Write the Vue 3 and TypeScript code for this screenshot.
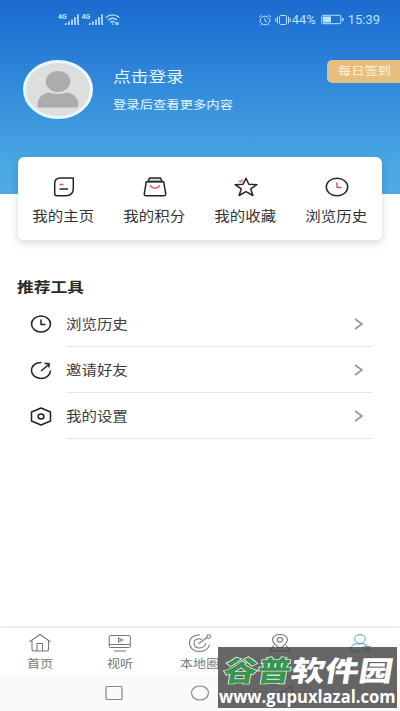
<script setup lang="ts">
interface Item { id: string; label: string }

const shortcuts: Item[] = [
  { id: 'home', label: '我的主页' },
  { id: 'points', label: '我的积分' },
  { id: 'star', label: '我的收藏' },
  { id: 'history', label: '浏览历史' },
]
const tools: Item[] = [
  { id: 'history', label: '浏览历史' },
  { id: 'invite', label: '邀请好友' },
  { id: 'settings', label: '我的设置' },
]
const tabs: Item[] = [
  { id: 'home', label: '首页' },
  { id: 'video', label: '视听' },
  { id: 'local', label: '本地圈' },
  { id: 'place', label: '' },
  { id: 'me', label: '' },
]
</script>

<template>
  <div class="screen">
    <header class="hero">
      <div class="status">
        <div class="signals">
          <template v-for="n in 2" :key="n">
            <span class="net">4G</span>
            <svg class="bars" width="14" height="11" viewBox="0 0 14 11"><path d="M1 11V9M4 11V7.5M7 11V5.5M10 11V3M13 11V.5" /></svg>
          </template>
          <svg class="wifi" width="15" height="11" viewBox="0 0 15 11"><path d="M.7 3.5q6.8-5.2 13.6 0M3 6q4.500-3.500 9 0M5.400 8.300q2.100-1.500 4.200 0M7 10h1M11 8v3M13 8v3" /></svg>
        </div>
        <div class="power">
          <svg width="14" height="12" viewBox="0 0 14 12"><ellipse cx="7" cy="6.500" rx="4.900" ry="4.300" /><path d="M7 4v3l2 1M1 3l2.500-2M13 3l-2.500-2M3 10.500 2 11.500M11 10.500l1 1" /></svg>
          <svg class="vib" width="16" height="12" viewBox="0 0 16 12"><rect x="4.500" y="1.500" width="7" height="9" rx="1" /><path d="M2.500 2.500v7M13.500 2.500v7M.8 4v4M15.200 4v4" /></svg>
          <span class="pct">44%</span>
          <svg class="battery" width="23" height="11" viewBox="0 0 23 11"><rect x=".8" y="1.300" width="19" height="8.400" rx="1" /><path class="fill" d="M2 2.500h8v6H2zM21 4h1.500v3H21z" /></svg>
          <span class="time">15:39</span>
        </div>
      </div>
      <div class="profile">
        <svg class="avatar" width="70" height="60" viewBox="0 0 70 60">
          <ellipse class="ring" cx="35" cy="29.500" rx="33.500" ry="28" />
          <ellipse class="person" cx="35" cy="21.500" rx="12.200" ry="10.500" />
          <path class="person" d="M14.700 48v-3.500c0-6 5.500-11.500 12-11.500q8.300 3 16.600 0c6.500 0 12 5.500 12 11.500V46q0 2-2.500 2z" transform="translate(0 -.5)" />
        </svg>
        <div class="login">
          <div class="name stretch">点击登录</div>
          <div class="hint stretch">登录后查看更多内容</div>
        </div>
        <div class="sign"><span class="stretch">每日签到</span></div>
      </div>
    </header>

    <section class="card">
      <div v-for="s in shortcuts" :key="s.id" class="shortcut">
        <svg width="24" height="20" viewBox="0 0 24 20">
          <template v-if="s.id === 'home'">
            <path d="M8.500 1H21.300V11.500Q21.300 18.700 14 18.700H5Q2.700 18.700 2.700 16.500V6.500Q2.700 1 8.500 1Z" /><path d="M7.500 12h8.500" /><path class="red" d="M7.500 7.500h4" />
          </template>
          <template v-else-if="s.id === 'points'">
            <path class="lid" d="M5 4.500 6.500 1h11L19 4.500z" /><path d="M3.300 4.700h17.400l2 12q.2 2-2 2H3.300q-2.200 0-2-2z" /><path class="red" d="M7 8.500q5 5.500 10 0" />
          </template>
          <template v-else-if="s.id === 'star'">
            <path d="m12 1.200 2.800 6.100 8.100.4-6.200 4.100 2.200 6.700-6.900-3.800-6.900 3.800 2.200-6.700-6.200-4.100 8.100-.4z" /><path class="red thin" d="m4.500 4 2 .8 2-2.500M8.500 6l1.400-2" />
          </template>
          <template v-else>
            <ellipse cx="12" cy="10" rx="10.700" ry="8.800" /><path class="red" d="M12 5.500v5h4.500" />
          </template>
        </svg>
        <span class="stretch">{{ s.label }}</span>
      </div>
    </section>

    <main class="tools">
      <h2 class="stretch">推荐工具</h2>
      <div v-for="t in tools" :key="t.id" class="row">
        <svg class="lead" width="22" height="19" viewBox="0 0 22 19">
          <template v-if="t.id === 'history'"><ellipse cx="11" cy="9" rx="9.500" ry="8" /><path d="M11 4.500v5h4.500" /></template>
          <template v-else-if="t.id === 'invite'"><path d="M11.500 1.500C5.800 1.200 1.500 5 1.500 9.500s4.300 8 9.500 8 9.500-3.700 9.500-8M11 10l8-6.800M14.500 2.500H19v4" /></template>
          <template v-else><path d="m11 1 9.500 4v9L11 18l-9.500-4V5z" /><ellipse cx="11" cy="9.500" rx="2.900" ry="2.500" /></template>
        </svg>
        <div class="line">
          <span class="stretch">{{ t.label }}</span>
          <svg class="arrow" width="10" height="12" viewBox="0 0 10 12"><path d="m1 1 7 5-7 5" /></svg>
        </div>
      </div>
    </main>

    <nav class="tabs">
      <div v-for="t in tabs" :key="t.id" class="tab" :class="{ active: t.id === 'me' }">
        <svg width="24" height="20" viewBox="0 0 24 20">
          <path v-if="t.id === 'home'" d="M1.500 8.700 12 1.500l10.500 7.200M4 7.500V16q0 2 2 2h12.500q2 0 2-2V7.500M9 18v-7.500h5.500V18" />
          <path v-else-if="t.id === 'video'" d="M3 2.500h17.500q1.800 0 1.800 1.500v9q0 1.500-1.800 1.500H3q-1.800 0-1.800-1.500V4Q1.200 2.500 3 2.500M1.500 11.500h20.500M6 18h12M10.500 5v4l4-2z" />
          <path v-else-if="t.id === 'local'" d="M12 2C6 1.500 1.500 5 1.500 10s4 8.500 10 8.500 9.500-3.500 10-7M14 6.500c-4-2-8 0-8 3.500s2.700 5 5.700 5 6-2 6-5M11 10.500l8-6M22.500 3.500a1.800 1.800 0 1 1-3.600 0a1.800 1.800 0 1 1 3.600 0M10 10h2" />
          <template v-else-if="t.id === 'place'"><path d="M12 15.500Q4.500 10 4.500 6.500C4.500 3.500 8 1.500 12 1.500s7.500 2 7.500 5q0 3.500-7.500 9M6 12l-4 6h20l-4-6" /><ellipse cx="12" cy="6.700" rx="2.700" ry="2.300" /></template>
          <template v-else><ellipse cx="12" cy="6" rx="5.300" ry="4.500" /><path d="M13 18H2.500q0-7.200 7-7.200h5q3 0 4.500 1.700M15.500 13.500h7M15.500 15.800h7M15.500 18h7" /></template>
        </svg>
        <span v-if="t.label" class="stretch">{{ t.label }}</span>
      </div>
    </nav>

    <footer class="system">
      <svg width="20" height="18" viewBox="0 0 20 18"><rect x="2" y="2.500" width="16" height="13" rx="1" /></svg>
      <svg width="20" height="18" viewBox="0 0 20 18"><ellipse cx="10" cy="9" rx="8.500" ry="7" /></svg>
      <svg width="20" height="18" viewBox="0 0 20 18"><path d="M16 2v14L3 9z" /></svg>
    </footer>

    <aside class="watermark">
      <div class="brand"><span class="green">谷普</span><span>软件园</span></div>
      <div class="url">www.gupuxlazal.com</div>
    </aside>
  </div>
</template>

<style>
body { margin: 0; overflow: hidden; }
</style>

<style scoped>
.screen { position: relative; width: 400px; height: 711px; display: flex; flex-direction: column; background: #fff; overflow: hidden; font-family: Roboto, "Noto Sans CJK SC", sans-serif; color: #333; }
svg { display: block; flex: none; fill: none; stroke: currentColor; stroke-linejoin: round; }
.stretch { display: inline-block; white-space: nowrap; transform: scaleX(1.18); transform-origin: left center; }
.hero { height: 194px; flex: none; background: linear-gradient(#1b6bce 0, #2175d4 30px, #4aa8e3 165px, #4daae4); }
.status { height: 39px; display: flex; justify-content: space-between; align-items: center; padding: 0 20px 0 58px; color: #b9e2fc; }
.signals, .power { display: flex; align-items: center; }
.net { font-size: 7px; line-height: 7px; font-weight: 700; padding-bottom: 4px; width: 7px; }
.bars { stroke-width: 1.700; margin-right: 2.500px; }
.wifi { stroke-width: 1.400; }
.pct { font-size: 13px; width: 26px; margin-right: 3px; }
.vib { margin: 0 1px 0 3px; }
.battery { margin-right: 4px; }
.fill { fill: currentColor; stroke: none; }
.time { font-size: 13px; }
.profile { display: flex; align-items: flex-start; padding: 21px 0 0 23px; }
.ring { fill: #dedede; stroke: #e8f8ff; stroke-width: 3; }
.person { fill: #acacac; stroke: none; }
.login { flex: 1; padding: 7px 0 0 20px; color: #e6f7ff; }
.name { display: block; font-size: 15px; line-height: 20px; }
.hint { display: block; font-size: 11.300px; line-height: 18px; margin-top: 10px; }
.sign { box-sizing: border-box; width: 73px; height: 23px; border-radius: 5px 0 0 5px; background: #e8be80; color: #fff5df; font-size: 11.200px; line-height: 24px; padding-left: 11px; }
.card { box-sizing: border-box; width: 364px; height: 83px; flex: none; margin: -37px 0 0 18px; background: #fff; border-radius: 6px; box-shadow: 0 3px 8px rgba(0, 0, 0, .16); display: grid; grid-template-columns: repeat(4, 1fr); }
.shortcut { display: flex; flex-direction: column; align-items: center; padding-top: 20px; font-size: 13.100px; line-height: 20px; color: #333; }
.shortcut svg { color: #262329; stroke-width: 1.500; margin-bottom: 10px; }
.shortcut .stretch, .tab .stretch { transform-origin: center; }
.red { stroke: #d9545c; }
.thin { stroke-width: 1.200; }
.lid { fill: #ddd; }
.tools { flex: 1; padding: 37px 28px 0 17px; }
h2 { margin: 0 0 3px; font-size: 14.200px; line-height: 21px; font-weight: 700; color: #292929; }
.tools h2 { display: block; }
.row { display: flex; height: 46px; align-items: center; padding-left: 13px; }
.lead { color: #222; stroke-width: 1.500; margin-right: 14px; }
.line { flex: 1; box-sizing: border-box; height: 46px; border-bottom: 1px solid #e4e4e4; display: flex; align-items: center; justify-content: space-between; padding-right: 8px; font-size: 13.100px; color: #3c3c3c; }
.arrow { stroke: #999; stroke-width: 1.900; }
.tabs { box-sizing: border-box; height: 47px; flex: none; display: grid; grid-template-columns: repeat(5, 1fr); box-shadow: 0 -1px 3px rgba(0, 0, 0, .13); background: #fff; }
.tab { display: flex; flex-direction: column; align-items: center; padding-top: 5px; color: #777; font-size: 11.100px; line-height: 16px; }
.tab svg { stroke-width: 1.050; margin-bottom: 4px; }
.tab.active { color: #4d93b4; }
.tab.active svg { stroke-width: .9; }
.system { height: 36px; flex: none; box-sizing: border-box; background: #fafafa; display: flex; padding: 9px 0 0 104px; gap: 66px; color: #888; }
.system svg { stroke-width: 1.200; }
.watermark { position: absolute; left: 218px; top: 647px; width: 179px; height: 61px; background: rgba(68, 68, 68, .82); color: #fff; overflow: hidden; white-space: nowrap; }
.brand { font: 900 28px/32px "Noto Sans CJK SC", sans-serif; display: flex; margin: 6px 0 0 6px; width: 141px; transform: scaleX(1.21) skewX(-8deg); transform-origin: left center; }
.green { color: #39954b; -webkit-text-stroke: 1.300px #fff; paint-order: stroke fill; }
.url { font: 700 17px/20px "Open Sans", sans-serif; padding-left: 1px; margin-top: 2px; transform: scaleX(.975); transform-origin: left; }
</style>
